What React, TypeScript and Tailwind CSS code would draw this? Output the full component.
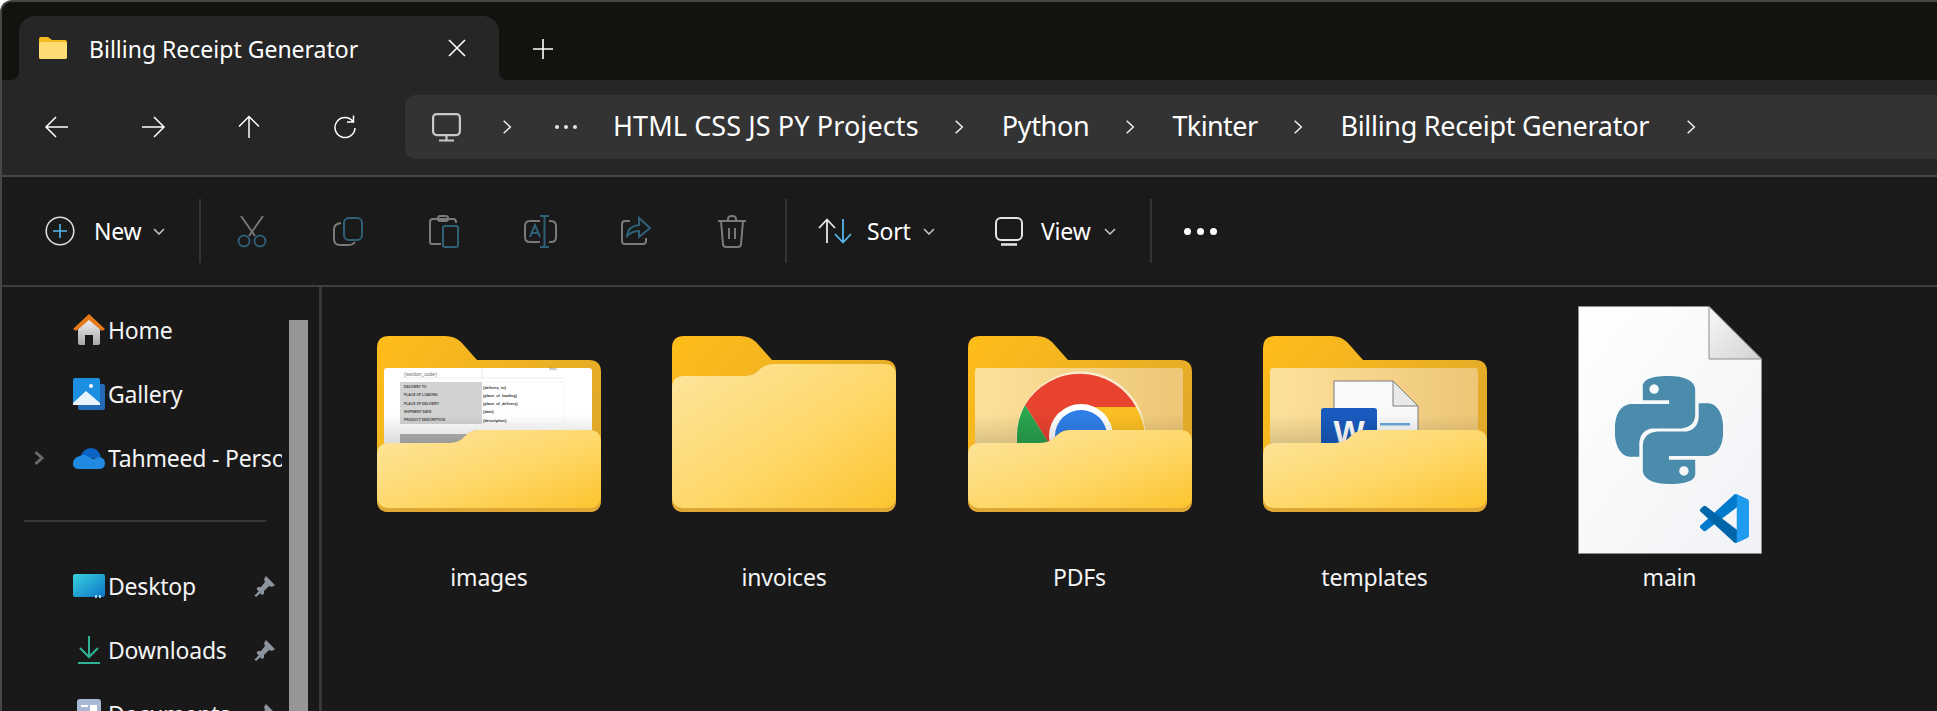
import React from "react";
import { SiPython } from "react-icons/si";

const G = "#7a7a7a";
const B = "#2f6078";

function Chevron({ className = "" }: { className?: string }) {
  return (
    <svg viewBox="0 0 12 18" className={className} fill="none" stroke="#f0f0f0" strokeWidth="1.8">
      <path d="M2 1.5 L10 9 L2 16.5" />
    </svg>
  );
}
function Down({ className = "" }: { className?: string }) {
  return (
    <svg viewBox="0 0 12 7" className={className} fill="none" stroke="#c8c8c8" strokeWidth="1.5">
      <path d="M1 1 L6 6 L11 1" />
    </svg>
  );
}
function Crumb({ text, className = "" }: { text: string; className?: string }) {
  return <span className={"text-[27px] leading-none text-white whitespace-nowrap " + className}>{text}</span>;
}
function NavIcon({ d }: { d: string }) {
  return (
    <div className="w-[96px] flex justify-center">
      <svg viewBox="0 0 26 24" className="w-[26px] h-[24px]" fill="none" stroke="#fff" strokeWidth="1.5">
        <path d={d} />
      </svg>
    </div>
  );
}
function Slot({ children }: { children: React.ReactNode }) {
  return <div className="w-[96px] flex justify-center items-center">{children}</div>;
}
function Divider({ className = "" }: { className?: string }) {
  return <div className={"w-[2px] h-[64px] bg-[#333333] " + className} />;
}

function Folder({ id, empty, children }: { id: string; empty?: boolean; children?: React.ReactNode }) {
  const front = empty
    ? "M0 52 Q0 40 12 40 H72 Q80 40 85 36 L88 33 Q94 28 102 28 H212 Q224 28 224 40 V"
    : "M0 119 Q0 107 12 107 H72 Q80 107 85 103 L88 100 Q94 94 102 94 H212 Q224 94 224 106 V";
  return (
    <svg viewBox="0 0 224 176" className="w-[224px] h-[176px]">
      <defs>
        <linearGradient id={id + "b"} x1="0" y1="0" x2="1" y2="0.6">
          <stop offset="0" stopColor="#ffbd1a" />
          <stop offset="1" stopColor="#e0a82a" />
        </linearGradient>
        <linearGradient id={id + "f"} x1="0" y1="0" x2="1" y2="1">
          <stop offset="0" stopColor="#fee59f" />
          <stop offset="0.55" stopColor="#fed869" />
          <stop offset="1" stopColor="#fdc42f" />
        </linearGradient>
        <linearGradient id={id + "p"} x1="0" y1="0" x2="1" y2="0">
          <stop offset="0" stopColor="#fde19b" />
          <stop offset="1" stopColor="#edc677" />
        </linearGradient>
        <linearGradient id={id + "s"} x1="0" y1="0" x2="0" y2="1">
          <stop offset="0" stopColor="#000" stopOpacity="0" />
          <stop offset="1" stopColor="#000" stopOpacity="0.16" />
        </linearGradient>
      </defs>
      <path d="M0 12 Q0 0 12 0 H68 Q78 0 84 6 L100 24 H212 Q224 24 224 36 V164 Q224 176 212 176 H12 Q0 176 0 164 Z" fill={`url(#${id}b)`} />
      {children}
      {!empty && <rect x="7" y="78" width="208" height="34" fill={`url(#${id}s)`} />}
      <path d={front + "164 Q224 176 212 176 H12 Q0 176 0 164 Z"} fill="#dfa735" />
      <path d={front + "160 Q224 172 212 172 H12 Q0 172 0 160 Z"} fill={`url(#${id}f)`} />
    </svg>
  );
}

function ThumbImages() {
  const left = ["DELIVERY TO", "PLACE OF LOADING", "PLACE OF DELIVERY", "SHIPMENT DATE", "PRODUCT DESCRIPTION"];
  const right = ["{delivery_to}", "{place_of_loading}", "{place_of_delivery}", "{date}", "{description}"];
  return (
    <g fontFamily="'Liberation Sans', sans-serif">
      <rect x="7" y="32" width="208" height="90" rx="3" fill="#fff" />
      <rect x="23" y="46" width="82" height="42" fill="#d2d2d2" />
      <rect x="105" y="46" width="82" height="42" fill="none" stroke="#eeeeee" strokeWidth="0.6" />
      <line x1="105" y1="32" x2="105" y2="42" stroke="#dddddd" strokeWidth="0.6" />
      <line x1="23" y1="42" x2="187" y2="42" stroke="#dddddd" strokeWidth="0.6" />
      <text x="27" y="39.5" fontSize="5" fill="#666">{"{section_code}"}</text>
      <text x="172" y="34" fontSize="3" fill="#777">{"{date}"}</text>
      {left.map((t, i) => (
        <text key={t} x="27" y={52 + i * 8.3} fontSize="3.4" fontWeight="700" fill="#444">{t}</text>
      ))}
      {right.map((t, i) => (
        <text key={t} x="106" y={52.5 + i * 8.3} fontSize="3.8" fontWeight="700" fill="#333">{t}</text>
      ))}
      <rect x="23" y="98" width="82" height="14" fill="#b4b4b4" />
    </g>
  );
}
function ThumbChrome({ id }: { id: string }) {
  return (
    <g>
      <rect x="7" y="32" width="208" height="90" rx="3" fill={`url(#${id}p)`} />
      <circle cx="113" cy="100" r="64.5" fill="#fff" opacity="0.6" />
      <path d="M113 100 L80 106 L57 69 A64 64 0 0 1 168 71 H113 Z" fill="#e8432f" />
      <path d="M113 71 H168 A64 64 0 0 1 177 100 V112 H113 Z" fill="#fbbf23" />
      <path d="M57 69 L80 106 V112 H49 V100 A64 64 0 0 1 57 69 Z" fill="#2aa44f" />
      <circle cx="113" cy="100" r="32" fill="#fff" />
      <circle cx="113" cy="100" r="26" fill="#2f7ee8" />
    </g>
  );
}
function ThumbWord({ id }: { id: string }) {
  return (
    <g>
      <rect x="7" y="32" width="208" height="90" rx="3" fill={`url(#${id}p)`} />
      <path d="M71 45 H130 L155 70 V120 H71 Z" fill="#f8f9fb" stroke="#7d7d7d" />
      <path d="M130 45 L155 70 H130 Z" fill="#e9e9e9" stroke="#7d7d7d" />
      <rect x="117" y="87" width="30" height="2.5" fill="#69a9dc" />
      <rect x="58" y="72" width="56" height="50" rx="3" fill="#185abd" />
      <text x="86" y="108" textAnchor="middle" fontSize="33" fontWeight="700" fill="#fff" fontFamily="'Liberation Sans', sans-serif">W</text>
    </g>
  );
}

function FileIcon() {
  return (
    <svg viewBox="0 0 184 248" className="w-[184px] h-[248px]">
      <defs>
        <linearGradient id="pg" x1="0" y1="0" x2="1" y2="1">
          <stop offset="0" stopColor="#ffffff" />
          <stop offset="1" stopColor="#f0f2f5" />
        </linearGradient>
        <linearGradient id="fg" x1="0" y1="0" x2="1" y2="1">
          <stop offset="0" stopColor="#f8f8f8" />
          <stop offset="1" stopColor="#d2d2d2" />
        </linearGradient>
      </defs>
      <path d="M0.5 0.5 H131 L183.5 53 V247.5 H0.5 Z" fill="url(#pg)" stroke="#8c8c8c" />
      <path d="M131 0.5 L183.5 53 H131 Z" fill="url(#fg)" stroke="#8c8c8c" />
      <g transform="translate(122 188) scale(0.49)">
        <path d="M96.46 10.8L75.86.9a6.2 6.2 0 0 0-7.08 1.2L1.34 63.6a4.2 4.2 0 0 0 0 6.2l5.5 5a4.2 4.2 0 0 0 5.3.2L93.4 13.4a4.1 4.1 0 0 1 6.6 3.3v-.2a6.2 6.2 0 0 0-3.54-5.7z" fill="#007acc" />
        <path d="M96.46 89.2L75.86 99.1a6.2 6.2 0 0 1-7.08-1.2L1.34 36.4a4.2 4.2 0 0 1 0-6.2l5.5-5a4.2 4.2 0 0 1 5.3-.2L93.4 86.6a4.1 4.1 0 0 0 6.6-3.3v.2a6.2 6.2 0 0 1-3.54 5.7z" fill="#0065a9" />
        <path d="M75.86 99.13a6.2 6.2 0 0 1-7.1-1.2c2.3 2.3 6.24.67 6.24-2.6V4.67c0-3.27-3.94-4.9-6.24-2.6a6.2 6.2 0 0 1 7.1-1.2l20.6 9.9A6.2 6.2 0 0 1 100 16.4v67.2a6.2 6.2 0 0 1-3.54 5.6z" fill="#1f9cf0" />
      </g>
    </svg>
  );
}

function Item({ label, children, file, className = "w-[295px]" }: { label: string; children: React.ReactNode; file?: boolean; className?: string }) {
  return (
    <div className={"flex flex-col items-center " + className}>
      <div className={"h-[248px] flex justify-center " + (file ? "" : "pt-[30px]")}>{children}</div>
      <div className="h-[46px] flex items-center text-[23px] text-[#f4f4f4] tracking-[-0.2px]">{label}</div>
    </div>
  );
}

function Pin() {
  return (
    <svg viewBox="0 0 22 22" className="w-[22px] h-[22px] shrink-0" fill="#8b939c">
      <path d="M12 1 L21 10 L18 12 L15 11 L10 16 L10 19 L8 20 L2.5 14 L4 12 L7 12 L11 7 L10 4 Z" />
      <path d="M6 15 L8 17 L2 22 L0.5 20.5 Z" />
    </svg>
  );
}

function SideRow({ icon, text, chevron, pin }: { icon: React.ReactNode; text: string; chevron?: boolean; pin?: boolean }) {
  return (
    <div className="h-[64px] flex items-center">
      <div className="w-[67px] pl-[31px] shrink-0">
        {chevron && (
          <svg viewBox="0 0 12 16" className="w-[12px] h-[16px]" fill="none" stroke="#6a6a6a" strokeWidth="3">
            <path d="M2.5 2 L9 8 L2.5 14" />
          </svg>
        )}
      </div>
      <div className="w-[39px] shrink-0 flex justify-center">{icon}</div>
      <div className="w-[174px] shrink-0 flex items-center overflow-hidden">
        <span className="text-[23px] text-[#f4f4f4] whitespace-nowrap tracking-[-0.2px] flex-1">{text}</span>
        {pin && <Pin />}
        {pin && <div className="w-[6px] shrink-0" />}
      </div>
    </div>
  );
}

export default function App() {
  return (
    <div className="w-[1937px] h-[711px] overflow-hidden bg-[#191919] [font-family:'Noto_Sans',sans-serif] border-l-2 border-t-2 border-[#474745] rounded-tl-[12px] flex flex-col">
      {/* tab strip */}
      <div className="h-[78px] shrink-0 flex bg-[#12120e]">
        <div className="w-[17px] bg-[#262626]">
          <div className="h-full bg-[#12120e] rounded-br-[8px]" />
        </div>
        <div className="w-[480px] mt-[14px] bg-[#262626] rounded-t-[16px] flex items-center pl-[20px]">
          <svg viewBox="0 0 28 22" className="w-[28px] h-[22px]">
            <path d="M0 2 Q0 0 2 0 H9 L13 3 H26 Q28 3 28 5 V20 Q28 22 26 22 H2 Q0 22 0 20 Z" fill="#f5b921" />
            <path d="M0 7 Q0 5 2 5 H26 Q28 5 28 7 V20 Q28 22 26 22 H2 Q0 22 0 20 Z" fill="#fedc74" />
          </svg>
          <span className="ml-[22px] w-[359px] pt-[2px] text-[23px] text-white whitespace-nowrap">Billing Receipt Generator</span>
          <svg viewBox="0 0 18 18" className="w-[18px] h-[18px]" fill="none" stroke="#fff" strokeWidth="1.6">
            <path d="M1 1 L17 17 M17 1 L1 17" />
          </svg>
        </div>
        <div className="flex-1 bg-[#262626]">
          <div className="h-full bg-[#12120e] rounded-bl-[8px] flex items-center pl-[34px] pt-[16px]">
            <svg viewBox="0 0 20 20" className="w-[20px] h-[20px]" fill="none" stroke="#fff" strokeWidth="1.6">
              <path d="M10 0 V20 M0 10 H20" />
            </svg>
          </div>
        </div>
      </div>
      {/* nav */}
      <div className="h-[97px] shrink-0 bg-[#262626] border-b-2 border-[#464646] flex items-start pt-[15px]">
        <div className="flex items-center h-[64px] w-[403px] pl-[7px] shrink-0">
          <NavIcon d="M24 12 H2 M12 2 L2 12 L12 22" />
          <NavIcon d="M2 12 H24 M14 2 L24 12 L14 22" />
          <NavIcon d="M13 23 V1.5 M3 11.5 L13 1.5 L23 11.5" />
          <NavIcon d="M21 6.5 A10 10 0 1 0 23 13 M21.5 0.5 V7 H15" />
        </div>
        <div className="flex-1 h-[64px] bg-[#333333] rounded-l-[10px] flex items-center">
          <svg viewBox="0 0 29 29" className="ml-[27px] w-[29px] h-[29px]" fill="none" stroke="#c9c9c9" strokeWidth="2.2">
            <rect x="1.1" y="1.1" width="26.8" height="21" rx="3.5" />
            <path d="M14.5 22 V27 M7 27.5 H22" />
          </svg>
          <Chevron className="ml-[41px] w-[10px] h-[16px]" />
          <div className="ml-[43px] w-[22px] flex justify-between">
            <div className="w-[4px] h-[4px] bg-[#e6e6e6] rounded-full" />
            <div className="w-[4px] h-[4px] bg-[#e6e6e6] rounded-full" />
            <div className="w-[4px] h-[4px] bg-[#e6e6e6] rounded-full" />
          </div>
          <div className="ml-[36px]"><Crumb text="HTML CSS JS PY Projects" className="tracking-[0.1px]" /></div>
          <Chevron className="ml-[35px] w-[10px] h-[16px]" />
          <div className="ml-[38px]"><Crumb text="Python" className="tracking-[-0.3px]" /></div>
          <Chevron className="ml-[36px] w-[10px] h-[16px]" />
          <div className="ml-[37px]"><Crumb text="Tkinter" className="tracking-[-0.6px]" /></div>
          <Chevron className="ml-[36px] w-[10px] h-[16px]" />
          <div className="ml-[37px]"><Crumb text="Billing Receipt Generator" className="tracking-[-0.3px]" /></div>
          <Chevron className="ml-[37px] w-[10px] h-[16px]" />
        </div>
      </div>
      {/* toolbar */}
      <div className="h-[110px] shrink-0 bg-[#1a1a1a] border-b-2 border-[#3e3e3e] flex items-center">
        <svg viewBox="0 0 30 30" className="ml-[43px] w-[30px] h-[30px]" fill="none" strokeWidth="1.6">
          <circle cx="15" cy="15" r="13.8" stroke="#dcdcdc" />
          <path d="M15 8 V22 M8 15 H22" stroke="#56b6ea" />
        </svg>
        <span className="ml-[19px] w-[59px] text-[23px] text-white tracking-[-0.2px]">New</span>
        <Down className="w-[12px] h-[7px]" />
        <Divider className="ml-[34px]" />
        <div className="w-[3px]" />
        <Slot>
          <svg viewBox="0 0 30 33" className="w-[30px] h-[33px]" fill="none" strokeWidth="1.8">
            <path d="M4 1 L18 21 M26 1 L12 21" stroke={G} />
            <circle cx="7" cy="26" r="5.5" stroke={B} />
            <circle cx="23" cy="26" r="5.5" stroke={B} />
          </svg>
        </Slot>
        <Slot>
          <svg viewBox="0 0 30 29" className="w-[30px] h-[29px]" fill="none" strokeWidth="2">
            <rect x="11" y="1" width="18" height="22" rx="5" stroke={B} />
            <path d="M8 6 Q1 7 1 12 V22 Q1 28 7 28 H15 Q20 28 22 25" stroke={G} />
          </svg>
        </Slot>
        <Slot>
          <svg viewBox="0 0 30 33" className="w-[30px] h-[33px]" fill="none" strokeWidth="2">
            <path d="M12 29 H3 Q1 29 1 27 V7 Q1 4 4 4 H24 Q27 4 27 7 V8" stroke={G} />
            <rect x="9" y="1" width="10" height="5" rx="2" stroke={G} />
            <rect x="14" y="11" width="15" height="21" rx="2" stroke={B} />
          </svg>
        </Slot>
        <Slot>
          <svg viewBox="0 0 33 33" className="w-[33px] h-[33px]" fill="none" strokeWidth="2">
            <path d="M16 6 H6 Q1 6 1 11 V22 Q1 27 6 27 H16" stroke={G} />
            <path d="M25 6 H27 Q32 6 32 11 V22 Q32 27 27 27 H25" stroke={G} />
            <path d="M20.5 1 V32 M16 1 H25 M16 32 H25" stroke={B} />
            <path d="M6 22 L11 10 L16 22 M8 18 H14" stroke={B} />
          </svg>
        </Slot>
        <Slot>
          <svg viewBox="0 0 30 30" className="w-[30px] h-[30px]" fill="none" strokeWidth="2">
            <path d="M9 5 H4 Q1 5 1 8 V25 Q1 28 4 28 H22 Q25 28 25 25 V22" stroke={G} />
            <path d="M6 20 Q7 10 18 9 V2 L29 12 L18 21 V15 Q11 15 6 20 Z" stroke={B} />
          </svg>
        </Slot>
        <Slot>
          <svg viewBox="0 0 30 33" className="w-[30px] h-[33px]" fill="none" stroke={G} strokeWidth="2">
            <path d="M1 6 H29 M4 6 L6 29 Q6 32 9 32 H21 Q24 32 24 29 L26 6 M11 6 V4 Q11 1 15 1 Q19 1 19 4 V6 M12 13 V24 M18 13 V24" />
          </svg>
        </Slot>
        <Divider className="ml-[5px]" />
        <svg viewBox="0 0 35 26" className="ml-[31px] w-[35px] h-[26px]" fill="none" strokeWidth="1.8">
          <path d="M9 25 V2 M1 10 L9 1.5 L17 10" stroke="#e8e8e8" />
          <path d="M25 1 V24 M17 16 L25 24.5 L33 16" stroke="#56b6ea" />
        </svg>
        <span className="ml-[14px] w-[56px] text-[23px] text-white tracking-[-0.2px]">Sort</span>
        <Down className="w-[12px] h-[7px]" />
        <svg viewBox="0 0 28 29" className="ml-[60px] w-[28px] h-[29px]" fill="none" stroke="#e6e6e6" strokeWidth="2">
          <rect x="1" y="1" width="26" height="22" rx="5" />
          <path d="M6 27.5 H22" strokeWidth="2.4" />
        </svg>
        <span className="ml-[18px] w-[63px] text-[23px] text-white tracking-[-0.2px]">View</span>
        <Down className="w-[12px] h-[7px]" />
        <Divider className="ml-[34px]" />
        <div className="ml-[32px] w-[33px] flex justify-between">
          <div className="w-[7px] h-[7px] bg-white rounded-full" />
          <div className="w-[7px] h-[7px] bg-white rounded-full" />
          <div className="w-[7px] h-[7px] bg-white rounded-full" />
        </div>
      </div>
      {/* body */}
      <div className="flex-1 flex min-h-0">
        <div className="w-[320px] shrink-0 flex border-r-[3px] border-[#383838]">
          <div className="w-[287px] shrink-0 pt-[11px]">
            <SideRow
              text="Home"
              icon={
                <svg viewBox="0 0 32 32" className="w-[32px] h-[32px]">
                  <defs>
                    <linearGradient id="hm" x1="0" y1="0" x2="0" y2="1">
                      <stop offset="0" stopColor="#f0f0f0" />
                      <stop offset="1" stopColor="#a8a8a8" />
                    </linearGradient>
                  </defs>
                  <path d="M5 15 L16 5 L27 15 V29 Q27 31 25 31 H20 V21 H12 V31 H7 Q5 31 5 29 Z" fill="url(#hm)" />
                  <path d="M0 15 L16 0 L32 15 L29 17 L16 6 L3 17 Z" fill="#e77a18" />
                </svg>
              }
            />
            <SideRow
              text="Gallery"
              icon={
                <svg viewBox="0 0 32 32" className="w-[32px] h-[32px]">
                  <path d="M5 6 H30 Q32 6 32 8 V30 Q32 32 30 32 H7 Q5 32 5 30 Z" fill="#2468b8" />
                  <rect x="0" y="0" width="27" height="27" rx="2" fill="#1d8fe0" />
                  <circle cx="18" cy="8" r="2" fill="#fff" />
                  <path d="M0 25 L13 13 L27 25 V27 H0 Z" fill="#e8f3fb" />
                </svg>
              }
            />
            <SideRow
              chevron
              text="Tahmeed - Personal"
              icon={
                <svg viewBox="0 0 32 21" className="w-[32px] h-[21px]">
                  <path d="M7 10 Q10 0 18 0 Q26 0 28 10 Z" fill="#0b63c4" />
                  <path d="M0 16 Q0 9 7 8 Q11 6 14 8 L20 11 L26 9 Q32 10 32 15 Q32 21 26 21 H6 Q0 21 0 16 Z" fill="#1f8ae0" />
                </svg>
              }
            />
            <div className="mt-[30px] ml-[22px] w-[242px] h-[2px] bg-[#383838]" />
            <div className="h-[32px]" />
            <SideRow
              pin
              text="Desktop"
              icon={
                <svg viewBox="0 0 32 24" className="w-[32px] h-[24px]">
                  <defs>
                    <linearGradient id="dk" x1="0" y1="0" x2="1" y2="1">
                      <stop offset="0" stopColor="#36d3dd" />
                      <stop offset="1" stopColor="#0f74c8" />
                    </linearGradient>
                  </defs>
                  <rect width="32" height="23" rx="2" fill="url(#dk)" />
                  <rect x="22" y="21" width="2" height="3" fill="#9fd4ef" />
                  <rect x="26" y="21" width="2" height="3" fill="#9fd4ef" />
                </svg>
              }
            />
            <SideRow
              pin
              text="Downloads"
              icon={
                <svg viewBox="0 0 22 28" className="w-[22px] h-[28px]" fill="none" stroke="#2fb397" strokeWidth="2">
                  <path d="M11 0 V21 M2 12 L11 21 L20 12 M0 27 H22" />
                </svg>
              }
            />
            <SideRow
              pin
              text="Documents"
              icon={
                <svg viewBox="0 0 24 30" className="w-[24px] h-[30px]">
                  <rect width="24" height="30" rx="3" fill="#a9b9d3" />
                  <rect x="4" y="6" width="7" height="2" fill="#fff" />
                  <rect x="13" y="6" width="7" height="7" fill="#fff" />
                </svg>
              }
            />
          </div>
          <div className="w-[19px] shrink-0 mt-[33px] bg-[#969696]" />
        </div>
        <div className="flex-1 flex items-start pl-[20px] pt-[19px]">
          <Item label="images" className="w-[294px]"><Folder id="a"><ThumbImages /></Folder></Item>
          <Item label="invoices" className="w-[296px]"><Folder id="b" empty /></Item>
          <Item label="PDFs"><Folder id="c"><ThumbChrome id="c" /></Folder></Item>
          <Item label="templates"><Folder id="d"><ThumbWord id="d" /></Folder></Item>
          <Item label="main" file>
            <div className="relative w-[184px] h-[248px]">
              <FileIcon />
              <SiPython className="absolute left-[37px] top-[69px] w-[108px] h-[110px] text-[#4b8bab]" />
            </div>
          </Item>
        </div>
      </div>
    </div>
  );
}
